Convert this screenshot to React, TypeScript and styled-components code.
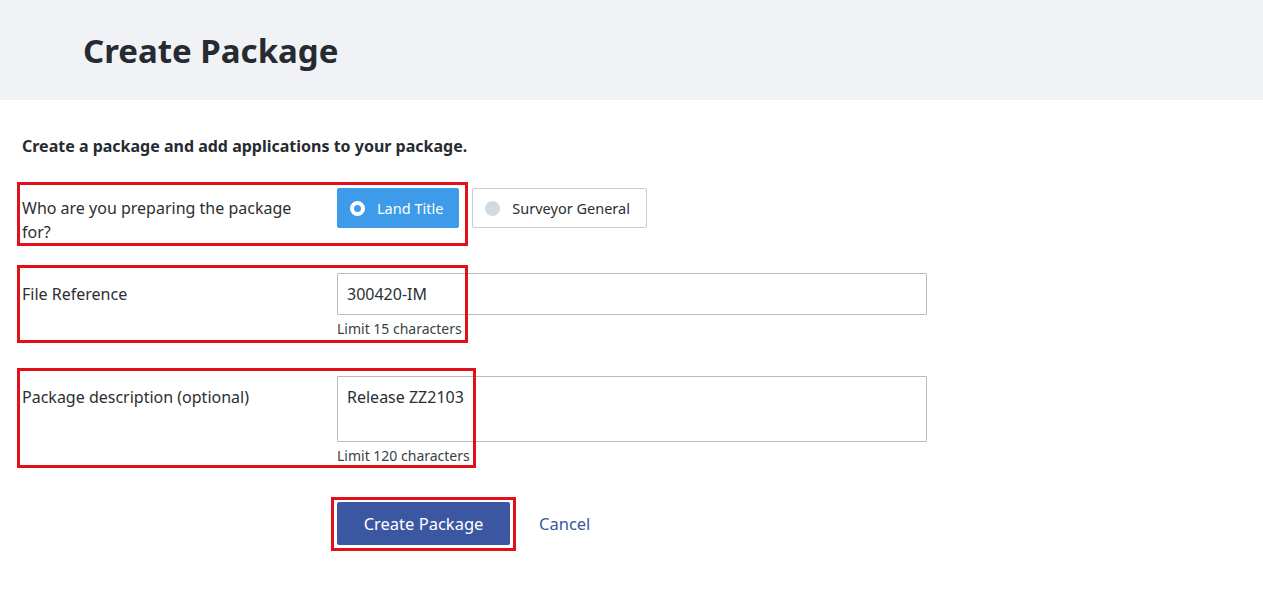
import styled, { createGlobalStyle } from 'styled-components'

const GlobalStyle = createGlobalStyle`
  html, body { margin: 0; padding: 0; background: #fff; }
  body { font-family: "Noto Sans", "Open Sans", sans-serif; color: #2b2f33; }
  * { box-sizing: border-box; }
`

const Page = styled.div`
  position: relative;
  width: 1263px;
  min-height: 612px;
`

const Header = styled.header`
  height: 100px;
  background: #f0f2f5;
  display: flex;
  align-items: center;
  padding-left: 83px;
`

const Title = styled.h1`
  margin: 0;
  font-size: 33px;
  font-weight: 700;
  color: #262b31;
`

const Content = styled.main`
  padding: 35px 0 0 22px;
`

const Intro = styled.p`
  margin: 0 0 26px;
  font-size: 16px;
  line-height: 22px;
  font-weight: 700;
  color: #262b31;
`

const Row = styled.div<{ $gap: number }>`
  display: grid;
  grid-template-columns: 315px 590px;
  align-items: start;
  margin-bottom: ${(p) => p.$gap}px;
`

const Label = styled.label<{ $top: number }>`
  font-size: 16px;
  line-height: 24px;
  color: #2b2f33;
  padding-top: ${(p) => p.$top}px;
  padding-right: 24px;
`

const Field = styled.div`
  display: flex;
  flex-direction: column;
`

const RadioGroup = styled.div`
  display: flex;
  gap: 13px;
  padding-top: 5px;
`

const RadioButton = styled.button<{ $selected?: boolean }>`
  display: flex;
  align-items: center;
  gap: 12px;
  height: 40px;
  padding: 0 ${(p) => (p.$selected ? 15 : 16)}px 0 12px;
  font-family: inherit;
  font-size: 14.5px;
  border-radius: 2px;
  cursor: pointer;
  border: 1px solid ${(p) => (p.$selected ? '#3d9be9' : '#c9cccf')};
  background: ${(p) => (p.$selected ? '#3d9be9' : '#fff')};
  color: ${(p) => (p.$selected ? '#fff' : '#2b2f33')};
`

const Dot = styled.span<{ $selected?: boolean }>`
  width: 15px;
  height: 15px;
  flex: none;
  border-radius: 50%;
  background: ${(p) => (p.$selected ? '#3d9be9' : '#d3d9e0')};
  border: ${(p) => (p.$selected ? '4px solid #fff' : 'none')};
`

const TextInput = styled.input`
  width: 590px;
  height: 42px;
  border: 1px solid #b9bcbf;
  border-radius: 1px;
  padding: 0 9px;
  font-family: inherit;
  font-size: 16px;
  color: #2b2f33;
  outline: none;
`

const TextArea = styled.textarea`
  display: block;
  width: 590px;
  height: 66px;
  border: 1px solid #b9bcbf;
  border-radius: 1px;
  padding: 8px 9px;
  font-family: inherit;
  font-size: 16px;
  line-height: 24px;
  color: #2b2f33;
  resize: none;
  outline: none;
`

const Hint = styled.span`
  font-size: 14px;
  line-height: 18px;
  color: #3a3f44;
  margin-top: 5px;
`

const Actions = styled.div`
  display: flex;
  align-items: center;
  gap: 29px;
  padding-left: 315px;
  margin-top: 37px;
`

const PrimaryButton = styled.button`
  width: 173px;
  height: 43px;
  padding: 0;
  background: #3b57a2;
  color: #fff;
  border: none;
  border-radius: 2px;
  font-family: inherit;
  font-size: 16.5px;
  cursor: pointer;
`

const LinkButton = styled.a`
  color: #3b57a2;
  font-size: 16.5px;
  text-decoration: none;
  cursor: pointer;
`

const Highlight = styled.div<{ $x: number; $y: number; $w: number; $h: number }>`
  position: absolute;
  left: ${(p) => p.$x}px;
  top: ${(p) => p.$y}px;
  width: ${(p) => p.$w}px;
  height: ${(p) => p.$h}px;
  border: 3px solid #e0111b;
  pointer-events: none;
`

export default function App() {
  return (
    <Page>
      <GlobalStyle />
      <Header>
        <Title>Create Package</Title>
      </Header>
      <Content>
        <Intro>Create a package and add applications to your package.</Intro>

        <Row $gap={29}>
          <Label $top={13}>Who are you preparing the package for?</Label>
          <RadioGroup>
            <RadioButton $selected>
              <Dot $selected />
              Land Title
            </RadioButton>
            <RadioButton>
              <Dot />
              Surveyor General
            </RadioButton>
          </RadioGroup>
        </Row>

        <Row $gap={38}>
          <Label $top={9}>File Reference</Label>
          <Field>
            <TextInput defaultValue="300420-IM" />
            <Hint>Limit 15 characters</Hint>
          </Field>
        </Row>

        <Row $gap={0}>
          <Label $top={9}>Package description (optional)</Label>
          <Field>
            <TextArea defaultValue="Release ZZ2103" />
            <Hint>Limit 120 characters</Hint>
          </Field>
        </Row>

        <Actions>
          <PrimaryButton>Create Package</PrimaryButton>
          <LinkButton>Cancel</LinkButton>
        </Actions>
      </Content>

      <Highlight $x={17} $y={182} $w={451} $h={64} />
      <Highlight $x={17} $y={265} $w={451} $h={78} />
      <Highlight $x={17} $y={368} $w={459} $h={100} />
      <Highlight $x={331} $y={497} $w={185} $h={54} />
    </Page>
  )
}
